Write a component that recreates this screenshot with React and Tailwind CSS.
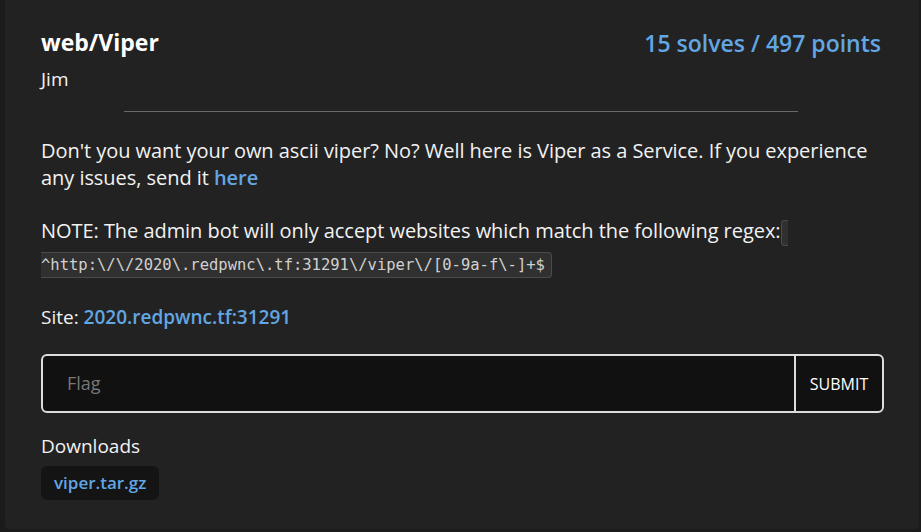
export default function App() {
  const font = { fontFamily: '"Segoe UI", "Open Sans", "Noto Sans", sans-serif' };
  return (
    <div className="min-h-[532px] w-[921px] bg-[#1b1b1b] pl-[5px] pr-[2px] pb-[3px]" style={font}>
      <div className="bg-[#222222] rounded-b-[4px] pl-[36px] pr-[38px] pt-[26px] pb-[28px] min-h-[529px] text-[#f2f2f2]">
        <div className="flex items-start justify-between">
          <div className="text-[23px] font-bold leading-[32px] text-white">web/Viper</div>
          <div className="text-[23px] font-semibold leading-[32px] text-[#62a6e3] mt-[1px]">15 solves / 497 points</div>
        </div>
        <div className="text-[19px] leading-[27px] mt-[7px]">Jim</div>
        <hr className="mx-auto w-[674px] border-0 border-t border-[#6a6a6a] mt-[18px] mb-[25px]" />
        <p className="text-[20px] leading-[27px] tracking-[-0.05px]">
          Don't you want your own ascii viper? No? Well here is Viper as a Service. If you experience any issues, send it{" "}
          <span className="font-semibold text-[#62a6e3]">here</span>
        </p>
        <p className="text-[20px] leading-[30px] mt-[25px] tracking-[-0.05px]">
          NOTE: The admin bot will only accept websites which match the following regex:
          <code
            className="bg-[#303030] border border-[#4a4a4a] rounded-[4px] px-[6px] py-[3px] text-[15.5px] text-[#d0d0d0] tracking-normal"
            style={{ fontFamily: '"DejaVu Sans Mono", "Liberation Mono", monospace', WebkitBoxDecorationBreak: 'slice', boxDecorationBreak: 'slice' }}
          >
            <wbr />
            ^http:\/\/2020\.redpwnc\.tf:31291\/viper\/[0-9a-f\-]+$
          </code>
        </p>
        <p className="text-[19px] leading-[27px] mt-[24px]">
          Site: <span className="font-semibold text-[#62a6e3]">2020.redpwnc.tf:31291</span>
        </p>
        <div className="mt-[23px] -mr-[3px] flex h-[59px] rounded-[6px] border-2 border-[#dddddd] bg-[#111111] overflow-hidden">
          <div className="flex-1 flex items-center pl-[24px] text-[18px] text-[#777777]">Flag</div>
          <div className="w-[88px] border-l-2 border-[#dddddd] flex items-center justify-center text-[16px] text-white">SUBMIT</div>
        </div>
        <div className="text-[19px] leading-[27px] mt-[20px]">Downloads</div>
        <div className="mt-[6px] inline-flex h-[34px] items-center rounded-[6px] bg-[#141414] px-[13px] text-[17px] font-semibold text-[#62a6e3]">viper.tar.gz</div>
      </div>
    </div>
  );
}
